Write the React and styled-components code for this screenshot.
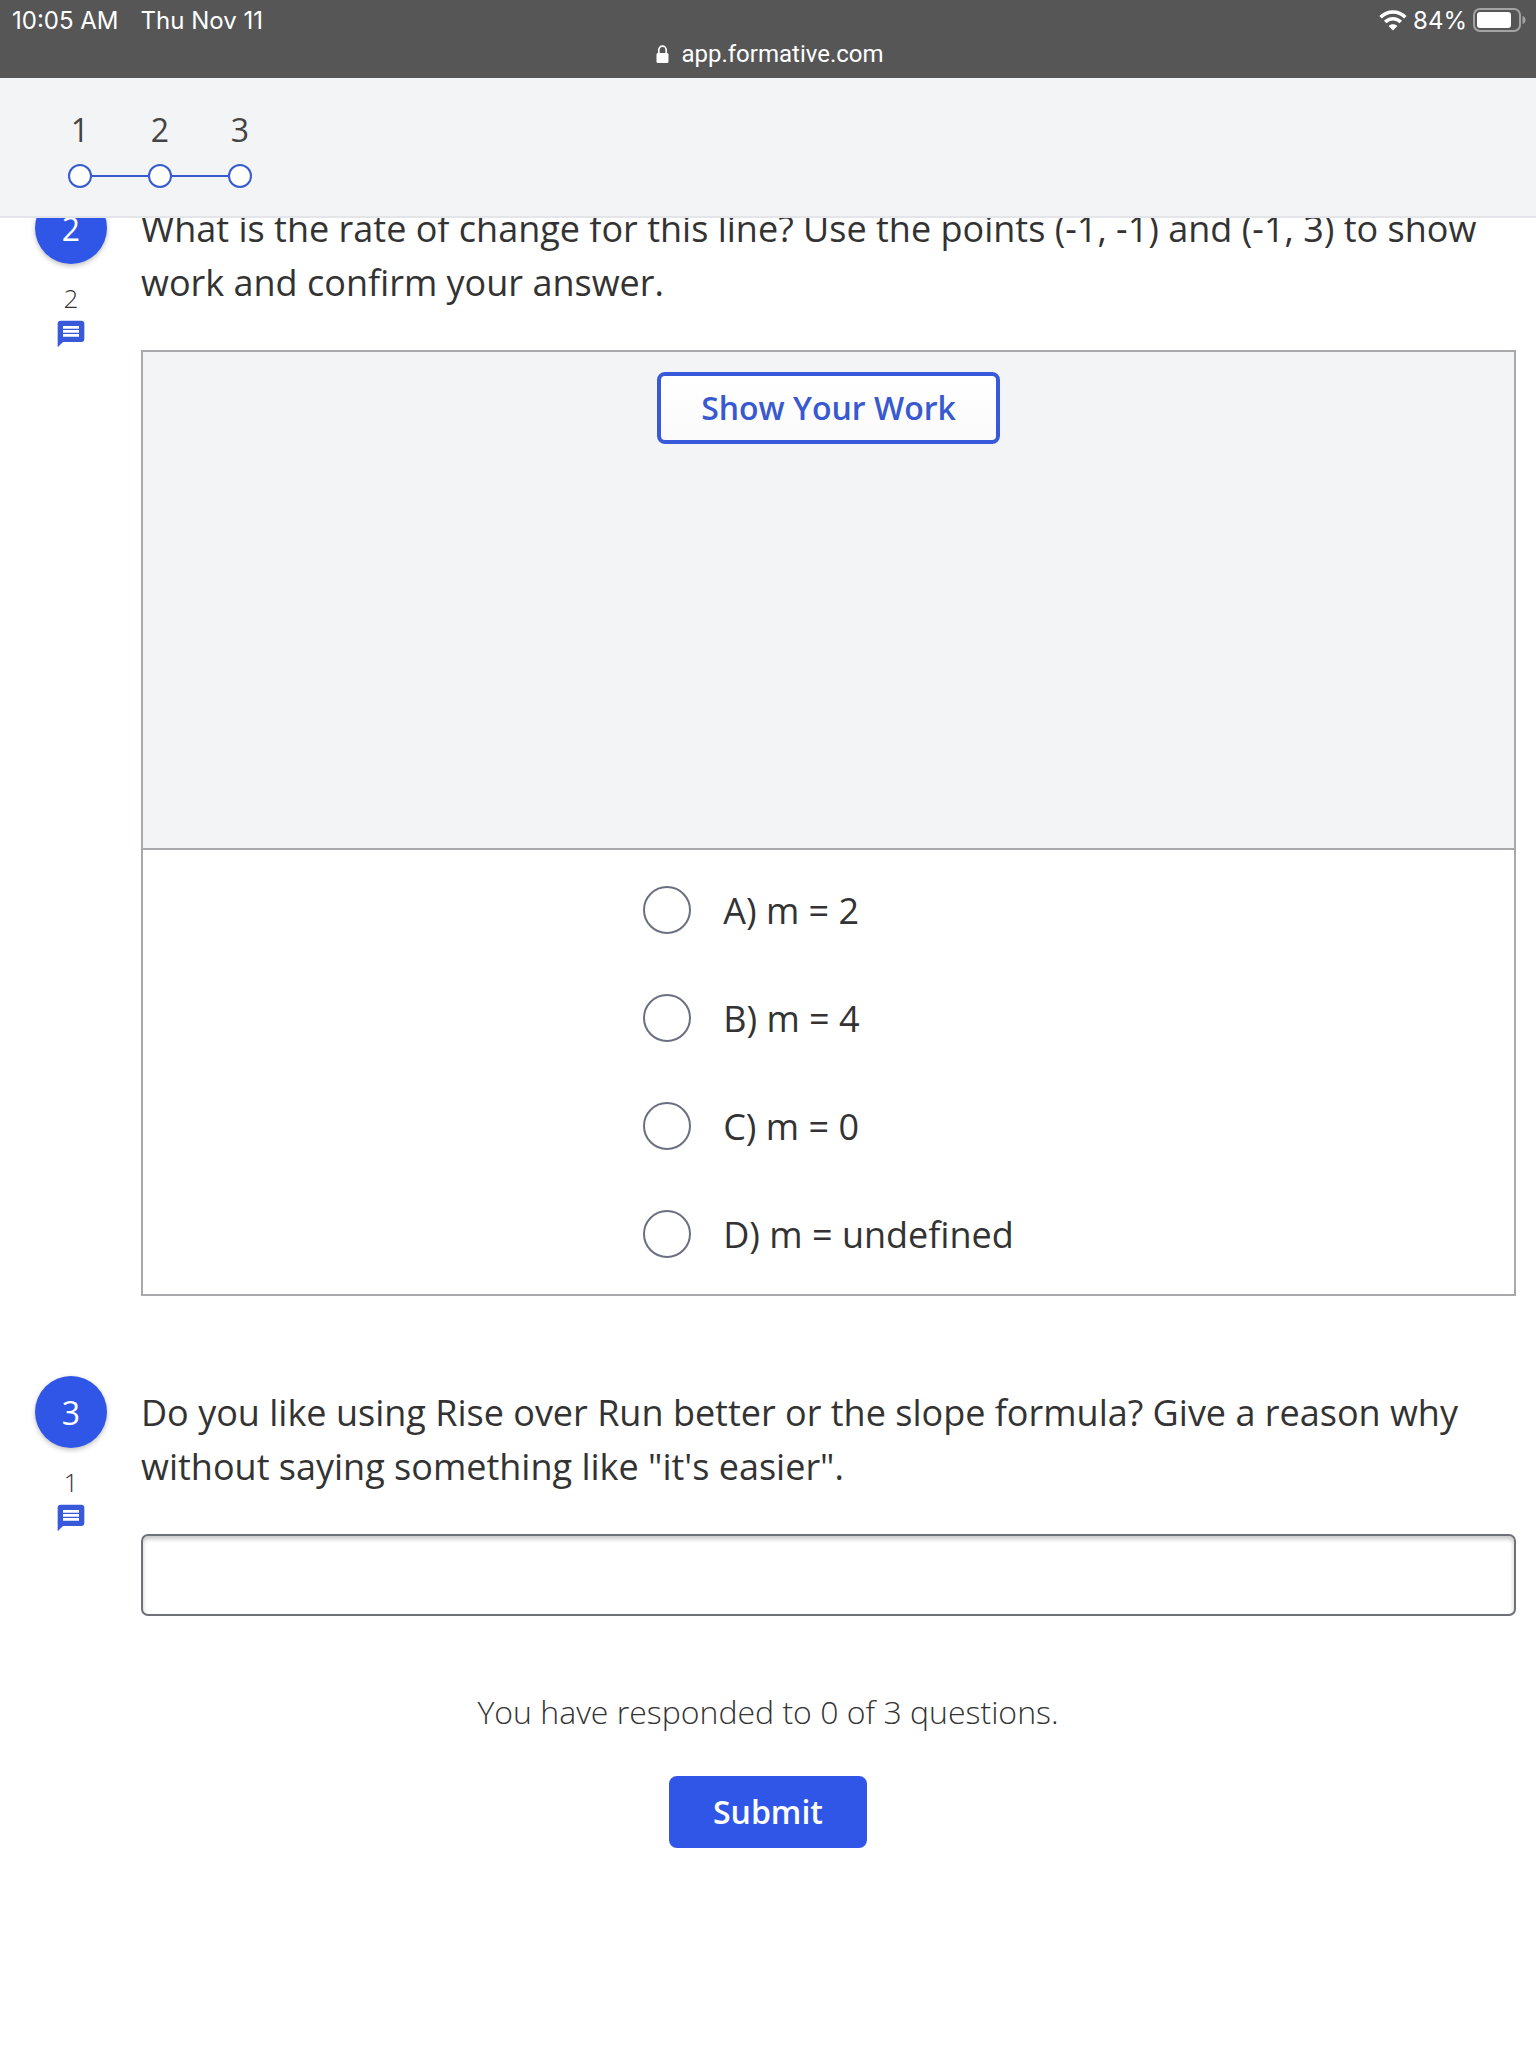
import React, { useState } from "react";
import styled, { createGlobalStyle } from "styled-components";

const GlobalStyle = createGlobalStyle`
  * { box-sizing: border-box; }
  body {
    margin: 0;
    background: #fff;
    color: #333;
    font-family: "Open Sans", "Noto Sans", sans-serif;
  }
  button, input { font: inherit; color: inherit; }
`;

const Page = styled.div`
  display: flex;
  flex-direction: column;
  min-height: 100vh;
`;

const StickyTop = styled.div`
  position: sticky;
  top: 0;
  z-index: 1;
`;

const DeviceBar = styled.div`
  height: 78px;
  background: #565656;
  color: #fff;
  font-family: Inter, "Liberation Sans", sans-serif;
  font-size: 24px;
`;

const StatusRow = styled.div`
  display: flex;
  justify-content: space-between;
  align-items: center;
  height: 40px;
  padding: 0 10px 0 12px;
`;

const StatusGroup = styled.div`
  display: flex;
  align-items: center;
  gap: ${(p) => p.$gap}px;
`;

const AddressRow = styled.div`
  display: flex;
  justify-content: center;
  align-items: center;
  gap: 12px;
  height: 28px;
  padding-left: 4px;
  font-family: Roboto, "Liberation Sans", sans-serif;
  font-size: 24px;
`;

const StepHeader = styled.header`
  padding: 30px 40px 28px;
  background: #f3f4f6;
  border-bottom: 2px solid #e3e5e8;
`;

const Steps = styled.nav`
  display: flex;
`;

const StepButton = styled.button`
  display: flex;
  flex-direction: column;
  gap: 12px;
  width: 80px;
  padding: 0;
  border: 0;
  background: none;
  color: #444;
  font-size: 32px;
  line-height: 44px;
  cursor: pointer;
`;

const StepNumber = styled.span`
  width: 100%;
  text-align: center;
`;

const StepTrack = styled.span`
  display: flex;
  align-items: center;
  width: 100%;
`;

const StepLine = styled.span`
  flex: 1;
  height: 2px;
  background: ${(p) => (p.$hidden ? "transparent" : "#3859d0")};
`;

const StepDot = styled.span`
  width: 24px;
  height: 24px;
  border: 2px solid #3859d0;
  border-radius: 50%;
  background: #fff;
`;

const Questions = styled.main`
  display: flex;
  flex-direction: column;
  gap: 80px;
  margin-top: -26px;
  padding: 0 20px 0 35px;
`;

const QuestionRow = styled.section`
  display: grid;
  grid-template-columns: 72px minmax(0, 1fr);
  column-gap: 34px;
`;

const QuestionSide = styled.div`
  display: flex;
  flex-direction: column;
  align-items: center;
`;

const Badge = styled.div`
  display: flex;
  align-items: center;
  justify-content: center;
  width: 72px;
  height: 72px;
  margin-bottom: 16px;
  border-radius: 50%;
  background: #3056e8;
  box-shadow: 0 2px 5px rgba(0, 0, 0, 0.25);
  color: #fff;
  font-size: 32px;
`;

const Points = styled.div`
  font-size: 26px;
  font-weight: 300;
  line-height: 36px;
`;

const CommentButton = styled.button`
  display: flex;
  padding: 2px 0 0;
  border: 0;
  background: none;
  color: #3859da;
  cursor: pointer;
`;

const QuestionBody = styled.div`
  display: flex;
  flex-direction: column;
  gap: 40px;
  padding-top: 10px;
`;

const QuestionText = styled.h2`
  margin: 0;
  font-size: 36px;
  font-weight: 400;
  line-height: 54px;
`;

const AnswerBox = styled.div`
  border: 2px solid #a8a9ab;
`;

const WorkArea = styled.div`
  display: flex;
  justify-content: center;
  align-items: flex-start;
  min-height: 498px;
  padding: 20px;
  border-bottom: 2px solid #a8a9ab;
  background: #f3f4f6;
`;

const ActionButton = styled.button`
  height: 72px;
  padding: 0 40px;
  border: 4px solid #3859da;
  border-radius: 8px;
  background: ${(p) => (p.$solid ? "#3056e8" : "linear-gradient(#fff, #fafafa)")};
  border-color: ${(p) => (p.$solid ? "#3056e8" : "#3859da")};
  color: ${(p) => (p.$solid ? "#fff" : "#3859d0")};
  font-size: 32px;
  font-weight: 600;
  line-height: 44px;
  cursor: pointer;
`;

const Options = styled.fieldset`
  display: flex;
  flex-direction: column;
  gap: 60px;
  width: fit-content;
  margin: 0 auto;
  padding: 36px 0;
  border: 0;
`;

const Option = styled.label`
  display: flex;
  align-items: center;
  gap: 32px;
  height: 48px;
  font-size: 36px;
  cursor: pointer;
`;

const Radio = styled.input`
  appearance: none;
  flex: none;
  width: 48px;
  height: 48px;
  margin: 0;
  border: 2px solid #6b7080;
  border-radius: 50%;
  background: #fff;
  &:checked {
    background: #3056e8;
    box-shadow: inset 0 0 0 8px #fff;
  }
`;

const AnswerInput = styled.input`
  width: 100%;
  height: 82px;
  padding: 0 20px;
  border: 2px solid #6f7178;
  border-radius: 7px;
  background: #fff;
  box-shadow: inset 0 3px 4px rgba(0, 0, 0, 0.22);
  font-size: 36px;
`;

const Footer = styled.footer`
  display: flex;
  flex-direction: column;
  align-items: center;
  gap: 42px;
  padding: 74px 20px;
`;

const Progress = styled.p`
  margin: 0;
  font-size: 32px;
  font-weight: 300;
  line-height: 44px;
`;

const WifiIcon = () => (
  <svg width="28" height="21" viewBox="0 0 28 21" fill="none" stroke="#fff" aria-hidden="true">
    <path d="M1.6 7.2C8.6 .2 19.4 .2 26.4 7.2" strokeWidth="3.6" />
    <path d="M6.2 12C10.6 7.6 17.4 7.6 21.8 12" strokeWidth="3.6" />
    <path d="M14 20.4L9.6 16C12 13.7 16 13.7 18.4 16Z" fill="#fff" stroke="none" />
  </svg>
);

const BatteryIcon = () => (
  <svg width="53" height="24" viewBox="0 0 53 24" aria-hidden="true">
    <rect x="1" y="1" width="46" height="22" rx="6" fill="none" stroke="#a3a3a3" strokeWidth="2" />
    <rect x="4" y="4" width="34" height="16" rx="3" fill="#fff" />
    <path d="M49.500 8C53.500 9 53.500 15 49.500 16Z" fill="#a3a3a3" />
  </svg>
);

const LockIcon = () => (
  <svg width="13" height="18" viewBox="0 0 13 18" aria-hidden="true">
    <rect x="0.500" y="8" width="12" height="10" rx="1.500" fill="#fff" />
    <path d="M2.800 9V5.200a3.700 4.100 0 0 1 7.400 0V9" fill="none" stroke="#fff" strokeWidth="1.700" />
  </svg>
);

const MessageIcon = () => (
  <svg width="32" height="32" viewBox="0 0 24 24" fill="currentColor" aria-hidden="true">
    <path d="M20 2H4c-1.100 0-1.990.9-1.990 2L2 22l4-4h14c1.100 0 2-.9 2-2V4c0-1.100-.9-2-2-2zm-2 12H6v-2h12v2zm0-3H6V9h12v2zm0-3H6V6h12v2z" />
  </svg>
);

const stepNumbers = [1, 2, 3];
const choices = ["A) m = 2", "B) m = 4", "C) m = 0", "D) m = undefined"];

function Question({ number, points, text, textId, children }) {
  return (
    <QuestionRow>
      <QuestionSide>
        <Badge>{number}</Badge>
        <Points>{points}</Points>
        <CommentButton type="button" aria-label={`Comments on question ${number}`}>
          <MessageIcon />
        </CommentButton>
      </QuestionSide>
      <QuestionBody>
        <QuestionText id={textId}>{text}</QuestionText>
        {children}
      </QuestionBody>
    </QuestionRow>
  );
}

export default function App() {
  const [choice, setChoice] = useState("");
  const [answer, setAnswer] = useState("");

  return (
    <Page>
      <GlobalStyle />
      <StickyTop>
        <DeviceBar>
          <StatusRow>
            <StatusGroup $gap={22}>
              <span>10:05 AM</span>
              <span>Thu Nov 11</span>
            </StatusGroup>
            <StatusGroup $gap={6}>
              <WifiIcon />
              <span>84%</span>
              <BatteryIcon />
            </StatusGroup>
          </StatusRow>
          <AddressRow>
            <LockIcon />
            <span>app.formative.com</span>
          </AddressRow>
        </DeviceBar>
        <StepHeader>
          <Steps aria-label="Questions">
            {stepNumbers.map((n, i) => (
              <StepButton key={n} type="button">
                <StepNumber>{n}</StepNumber>
                <StepTrack>
                  <StepLine $hidden={i === 0} />
                  <StepDot />
                  <StepLine $hidden={i === stepNumbers.length - 1} />
                </StepTrack>
              </StepButton>
            ))}
          </Steps>
        </StepHeader>
      </StickyTop>

      <Questions>
        <Question
          number={2}
          points={2}
          textId="question-2"
          text="What is the rate of change for this line? Use the points (-1, -1) and (-1, 3) to show work and confirm your answer."
        >
          <AnswerBox>
            <WorkArea>
              <ActionButton type="button">Show Your Work</ActionButton>
            </WorkArea>
            <Options aria-labelledby="question-2">
              {choices.map((label) => (
                <Option key={label}>
                  <Radio
                    type="radio"
                    name="slope"
                    value={label}
                    checked={choice === label}
                    onChange={() => setChoice(label)}
                  />
                  {label}
                </Option>
              ))}
            </Options>
          </AnswerBox>
        </Question>

        <Question
          number={3}
          points={1}
          textId="question-3"
          text={`Do you like using Rise over Run better or the slope formula? Give a reason why without saying something like "it's easier".`}
        >
          <AnswerInput
            type="text"
            aria-labelledby="question-3"
            value={answer}
            onChange={(e) => setAnswer(e.target.value)}
          />
        </Question>
      </Questions>

      <Footer>
        <Progress>You have responded to 0 of 3 questions.</Progress>
        <ActionButton type="button" $solid>
          Submit
        </ActionButton>
      </Footer>
    </Page>
  );
}
